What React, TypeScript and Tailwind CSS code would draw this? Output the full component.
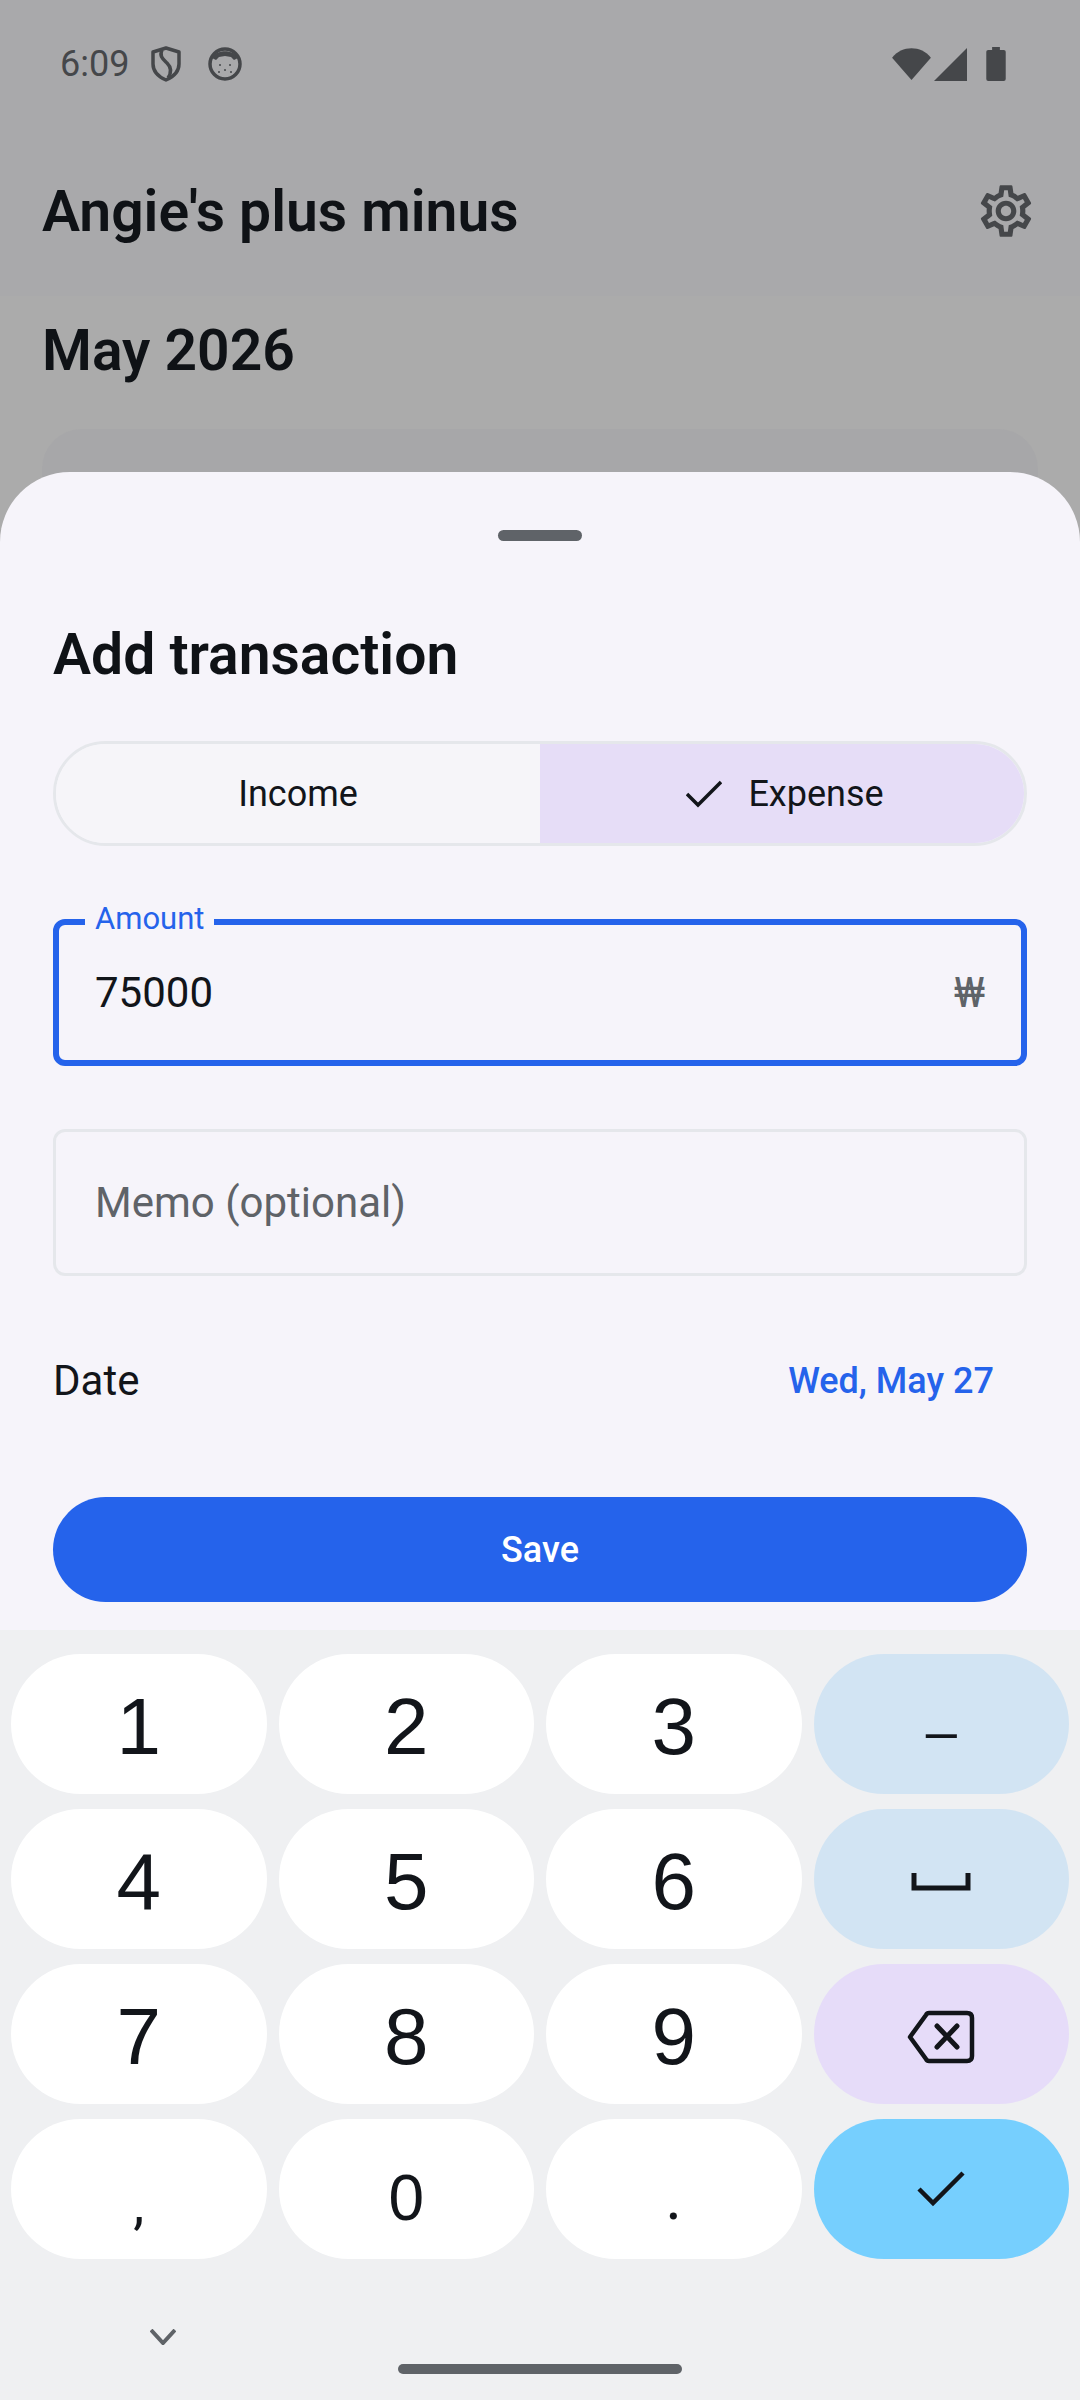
import { MdOutlineSettings } from 'react-icons/md';

const digits = ['1', '2', '3', '4', '5', '6', '7', '8', '9'];

function StatusBar() {
  return (
    <div className="flex h-[128px] items-center justify-between pl-[60px] pr-[74px] text-[#45474a]">
      <div className="flex items-center">
        <span className="text-[36px] leading-none">6:09</span>
        {/* shield */}
        <svg className="ml-[22px]" width="30" height="36" viewBox="0 0 30 36" fill="none" stroke="#45474a" strokeWidth="3.5">
          <path d="M15 2 L28 6 V18 C28 26 22 31 15 34 C8 31 2 26 2 18 V6 Z" strokeLinejoin="round" />
          <path d="M11 4 C8 10 12 13 16 17 C20 21 21 26 17 32" />
        </svg>
        {/* cat face */}
        <svg className="ml-[27px]" width="34" height="34" viewBox="0 0 34 34">
          <circle cx="17" cy="17" r="15" fill="#a9a9ab" stroke="#45474a" strokeWidth="3.5" />
          <path d="M4 11 C8 2 26 2 30 11 L26 13 L23 10 L17 9 L11 10 L8 13 Z" fill="#45474a" />
          <circle cx="12" cy="18" r="1" fill="#45474a" />
          <circle cx="22" cy="18" r="1" fill="#45474a" />
          <circle cx="17" cy="23" r="1" fill="#45474a" />
          <circle cx="11" cy="25" r="1" fill="#45474a" />
          <circle cx="23" cy="25" r="1" fill="#45474a" />
        </svg>
      </div>
      <div className="flex items-center">
        <svg width="39" height="33" viewBox="0 0 40 34">
          <path d="M0 10 C10 -3 30 -3 40 10 L20 33 Z" fill="#45474a" />
        </svg>
        <svg className="ml-[3px]" width="33" height="33" viewBox="0 0 33 33">
          <path d="M33 0 V33 H0 Z" fill="#45474a" />
        </svg>
        <svg className="ml-[19px]" width="20" height="34" viewBox="0 0 20 35">
          <path d="M6 0 H14 V3 H18 Q20 3 20 5 V33 Q20 35 18 35 H2 Q0 35 0 33 V5 Q0 3 2 3 H6 Z" fill="#45474a" />
        </svg>
      </div>
    </div>
  );
}

function Keyboard() {
  const keyClass = 'flex h-[140px] items-center justify-center rounded-[70px]';
  const digitClass = `${keyClass} bg-white pt-[6px] font-['Liberation_Sans',sans-serif] text-[80px] leading-none`;
  return (
    <div className="flex flex-col bg-[#eff0f2]">
      <div className="grid grid-cols-4 gap-x-3 gap-y-[15px] px-[11px] pt-6 text-[#12151a]">
        {digits.slice(0, 3).map((d) => (
          <div key={d} className={digitClass}>{d}</div>
        ))}
        <div className={`${keyClass} bg-[#d2e4f3] pt-[14px] font-['Liberation_Sans',sans-serif] text-[56px] leading-none`}>–</div>
        {digits.slice(3, 6).map((d) => (
          <div key={d} className={digitClass}>{d}</div>
        ))}
        <div className={`${keyClass} bg-[#d2e4f3]`}>
          <svg className="mt-[6px]" width="60" height="18" viewBox="0 0 60 18" fill="none" stroke="#12151a" strokeWidth="5">
            <path d="M3 0 V15 H57 V0" />
          </svg>
        </div>
        {digits.slice(6, 9).map((d) => (
          <div key={d} className={digitClass}>{d}</div>
        ))}
        <div className={`${keyClass} bg-[#e6dcf9]`}>
          <svg className="mt-[6px]" width="68" height="54" viewBox="0 0 68 54" fill="none" stroke="#12151a" strokeWidth="4.5" strokeLinejoin="round">
            <path d="M22 3 H60 Q65 3 65 8 V46 Q65 51 60 51 H22 Q20 51 19 49 L3 27 L19 5 Q20 3 22 3 Z" />
            <path d="M30 16 L50 37 M50 16 L30 37" strokeWidth="5" strokeLinecap="round" />
          </svg>
        </div>
        <div className={`${keyClass} bg-white pt-[30px] text-[56px] leading-none`}>,</div>
        <div className={`${keyClass} bg-white pt-[18px] font-['Liberation_Sans',sans-serif] text-[64px] leading-none`}>0</div>
        <div className={`${keyClass} bg-white pt-[18px] text-[64px] leading-none`}>.</div>
        <div className={`${keyClass} bg-[#76cffe]`}>
          <svg width="48" height="36" viewBox="0 0 48 36" fill="none" stroke="#12151a" strokeWidth="4.5">
            <path d="M2 18 L16 32 L46 2" />
          </svg>
        </div>
      </div>
      <div className="relative h-[141px]">
        <svg className="absolute left-[150px] top-[70px]" width="26" height="16" viewBox="0 0 26 16" fill="none" stroke="#5f6368" strokeWidth="4">
          <path d="M1 1 L13 14 L25 1" />
        </svg>
        <div className="absolute left-[398px] top-[105px] h-[10px] w-[284px] rounded-full bg-[#5f6368]" />
      </div>
    </div>
  );
}

export default function App() {
  return (
    <div className="relative h-[2400px] w-[1080px] overflow-hidden bg-[#ababab] font-[Roboto,sans-serif]">
      {/* page behind the sheet, dimmed */}
      <div className="h-[296px] bg-[#a9a9ab]">
        <StatusBar />
        <div className="flex items-center justify-between pl-[42px] pr-[43px] pt-[52px]">
          <h1 className="text-[57px] font-semibold leading-none text-[#0f1216]">Angie's plus minus</h1>
          <MdOutlineSettings size={62} color="#45474a" />
        </div>
      </div>
      <div className="px-[42px] pt-[26px]">
        <h2 className="text-[57px] font-semibold leading-none text-[#0f1216]">May 2026</h2>
        <div className="mt-[50px] h-[200px] rounded-[40px] bg-[#a7a7a9]" />
      </div>

      {/* bottom sheet */}
      <div className="absolute inset-x-0 bottom-0 top-[472px] flex flex-col overflow-hidden rounded-t-[70px] bg-[#f6f4fa]">
        <div className="flex-1 px-[53px]">
          <div className="mx-auto mt-[58px] h-[11px] w-[84px] rounded-full bg-[#5f6368]" />
          <h2 className="mt-[85px] text-[57px] font-semibold leading-none text-[#0f1216]">Add transaction</h2>

          <div className="mt-[58px] flex h-[105px] overflow-hidden rounded-full border-[3px] border-[#e5e7eb] text-[36px] text-[#12151a]">
            <div className="flex flex-1 items-center justify-center bg-[#f6f5f9]">Income</div>
            <div className="flex flex-1 items-center justify-center bg-[#e6ddf7]">
              <div className="flex items-center gap-[26px] pl-[6px]">
                <svg width="36" height="28" viewBox="0 0 36 28" fill="none" stroke="#12151a" strokeWidth="3.5">
                  <path d="M1 14 L12 25 L35 2" />
                </svg>
                <span>Expense</span>
              </div>
            </div>
          </div>

          <div className="relative mt-[73px] flex h-[147px] items-center justify-between rounded-[12px] border-[6px] border-[#2563eb] pl-[36px] pr-[36px]">
            <span className="absolute -top-[26px] left-[26px] bg-[#f6f4fa] px-[10px] text-[31px] leading-[40px] text-[#2563eb]">Amount</span>
            <span className="text-[42px] leading-none text-[#12151a]">75000</span>
            <span className="text-[42px] leading-none text-[#5f6368]">₩</span>
          </div>

          <div className="mt-[63px] flex h-[147px] items-center rounded-[12px] border-[3px] border-[#e5e7eb] pl-[39px]">
            <span className="text-[42px] leading-none text-[#5f6368]">Memo (optional)</span>
          </div>

          <div className="mt-[70px] flex h-[70px] items-center justify-between pr-[33px]">
            <span className="text-[42px] leading-none text-[#12151a]">Date</span>
            <span className="text-[36px] font-medium leading-none text-[#2563eb]">Wed, May 27</span>
          </div>

          <div className="mt-[81px] flex h-[105px] items-center justify-center rounded-full bg-[#2563eb] text-[36px] font-medium text-white">Save</div>
        </div>
        <Keyboard />
      </div>
    </div>
  );
}
